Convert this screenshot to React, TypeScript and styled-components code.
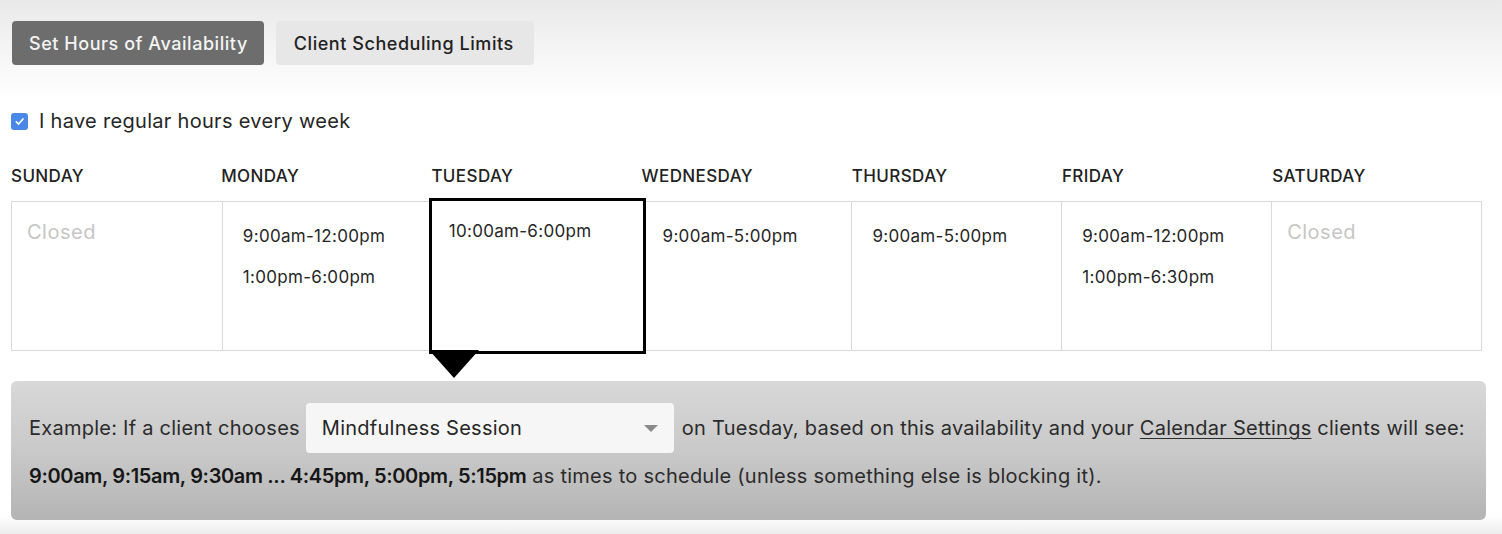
import React, { FC } from "react";
import styled, { createGlobalStyle } from "styled-components";

const GlobalStyle = createGlobalStyle`
  html, body {
    margin: 0;
    padding: 0;
    background: #ffffff;
  }
  body {
    font-family: Inter, "Liberation Sans", Arial, sans-serif;
    color: #1f1f1f;
  }
`;

const Page = styled.div`
  width: 1502px;
  height: 534px;
  box-sizing: border-box;
  padding: 21px 0 0 11px;
  overflow: hidden;
  background: linear-gradient(
    to bottom,
    #e9e9e9 0px,
    #f7f7f7 60px,
    #ffffff 100px,
    #ffffff 515px,
    #ededed 534px
  );
`;

const Tabs = styled.div`
  display: flex;
  gap: 12px;
  margin-left: 1px;
`;

const Tab = styled.button<{ $active?: boolean }>`
  height: 44px;
  padding: ${(p) => (p.$active ? "0 16px 0 17px" : "0 20px 0 18px")};
  border: none;
  border-radius: 4px;
  font-family: Inter, "Liberation Sans", Arial, sans-serif;
  font-size: 18px;
  font-weight: 500;
  letter-spacing: 0.55px;
  background: ${(p) => (p.$active ? "#6d6d6d" : "#e7e7e7")};
  color: ${(p) => (p.$active ? "#f4f4f4" : "#222222")};
  cursor: pointer;
`;

const CheckRow = styled.label`
  display: flex;
  align-items: center;
  gap: 11px;
  margin-top: 46px;
  height: 20px;
  font-size: 20px;
  letter-spacing: 0.3px;
  color: #262626;
`;

const CheckBox = styled.span`
  width: 17px;
  height: 17px;
  border-radius: 3px;
  background: #4a88e6;
  display: flex;
  align-items: center;
  justify-content: center;
`;

const DayHeaders = styled.div`
  display: grid;
  grid-template-columns: repeat(7, 210.2px);
  margin-top: 35px;
  height: 20px;
`;

const DayName = styled.div`
  font-size: 17px;
  font-weight: 500;
  line-height: 20px;
  color: #222222;
  letter-spacing: 0.4px;
`;

const Week = styled.div`
  display: grid;
  grid-template-columns: repeat(7, 1fr);
  width: 1471px;
  height: 150px;
  box-sizing: border-box;
  margin-top: 15px;
  border: 1px solid #d9d9d9;
`;

const DayCell = styled.div<{ $first?: boolean }>`
  position: relative;
  border-left: ${(p) => (p.$first ? "none" : "1px solid #d9d9d9")};
  padding: 24px 0 0 20px;
`;

const Closed = styled.div`
  margin: -6px 0 0 -5px;
  font-size: 20px;
  letter-spacing: 0.5px;
  color: #c6c6c6;
`;

const Slot = styled.div`
  font-size: 17px;
  line-height: 20px;
  letter-spacing: 0.3px;
  color: #262626;
  & + & {
    margin-top: 21px;
  }
`;

const Callout = styled.div`
  position: absolute;
  top: -4px;
  left: -4px;
  right: -4px;
  bottom: -4px;
  border: 3px solid #000000;
  background: #ffffff;
  box-sizing: border-box;
  padding: 20px 0 0 17px;
  z-index: 2;

  &::after {
    content: "";
    position: absolute;
    left: -3px;
    top: 100%;
    border-left: 25px solid transparent;
    border-right: 25px solid transparent;
    border-top: 28px solid #000000;
    width: 0;
    height: 0;
    margin-top: -1px;
  }
`;

const Example = styled.div`
  width: 1475px;
  height: 139px;
  box-sizing: border-box;
  margin-top: 30px;
  padding: 22px 18px 0 18px;
  border-radius: 6px;
  background: linear-gradient(to bottom, #d8d8d8 0%, #c9c9c9 50%, #b4b4b4 100%);
  font-size: 20px;
  color: #2b2b2b;
  letter-spacing: 0.25px;
`;

const ExampleLine = styled.div`
  display: flex;
  align-items: center;
  white-space: pre;
  height: 50px;
`;

const SecondLine = styled.div`
  margin-top: 11px;
  line-height: 24px;
  white-space: pre;
`;

const Select = styled.div`
  width: 368px;
  height: 50px;
  margin: 0 8px 0 6px;
  box-sizing: border-box;
  padding: 0 16px;
  border-radius: 4px;
  background: #f6f6f6;
  color: #262626;
  display: flex;
  align-items: center;
  justify-content: space-between;
`;

const Caret = styled.span`
  width: 0;
  height: 0;
  border-left: 7px solid transparent;
  border-right: 7px solid transparent;
  border-top: 7px solid #8a8a8a;
`;

const Link = styled.a`
  color: inherit;
  text-decoration: underline;
  text-underline-offset: 3px;
  text-decoration-thickness: 1px;
`;

const Strong = styled.b`
  font-weight: 600;
  letter-spacing: -0.35px;
  color: #161616;
`;

type Day = { name: string; slots: string[] };

const days: Day[] = [
  { name: "SUNDAY", slots: [] },
  { name: "MONDAY", slots: ["9:00am-12:00pm", "1:00pm-6:00pm"] },
  { name: "TUESDAY", slots: ["10:00am-6:00pm"] },
  { name: "WEDNESDAY", slots: ["9:00am-5:00pm"] },
  { name: "THURSDAY", slots: ["9:00am-5:00pm"] },
  { name: "FRIDAY", slots: ["9:00am-12:00pm", "1:00pm-6:30pm"] },
  { name: "SATURDAY", slots: [] },
];

const Slots: FC<{ slots: string[] }> = ({ slots }) =>
  slots.length === 0 ? (
    <Closed>Closed</Closed>
  ) : (
    <>
      {slots.map((s) => (
        <Slot key={s}>{s}</Slot>
      ))}
    </>
  );

const App: FC = () => (
  <>
    <GlobalStyle />
    <Page>
      <Tabs>
        <Tab $active>Set Hours of Availability</Tab>
        <Tab>Client Scheduling Limits</Tab>
      </Tabs>

      <CheckRow>
        <CheckBox>
          <svg width="11" height="11" viewBox="0 0 12 12">
            <path
              d="M2.5 6.3 L5 8.8 L9.8 3.2"
              fill="none"
              stroke="#ffffff"
              strokeWidth="1.8"
              strokeLinecap="round"
              strokeLinejoin="round"
            />
          </svg>
        </CheckBox>
        I have regular hours every week
      </CheckRow>

      <DayHeaders>
        {days.map((d) => (
          <DayName key={d.name}>{d.name}</DayName>
        ))}
      </DayHeaders>

      <Week>
        {days.map((d, i) => (
          <DayCell key={d.name} $first={i === 0}>
            {d.name === "TUESDAY" ? (
              <Callout>
                <Slots slots={d.slots} />
              </Callout>
            ) : (
              <Slots slots={d.slots} />
            )}
          </DayCell>
        ))}
      </Week>

      <Example>
        <ExampleLine>
          Example: If a client chooses
          <Select>
            Mindfulness Session
            <Caret />
          </Select>
          on Tuesday, based on this availability and your{" "}
          <Link href="#">Calendar Settings</Link> clients will see:
        </ExampleLine>
        <SecondLine>
          <Strong>9:00am, 9:15am, 9:30am ... 4:45pm, 5:00pm, 5:15pm</Strong> as
          times to schedule (unless something else is blocking it).
        </SecondLine>
      </Example>
    </Page>
  </>
);

export default App;
